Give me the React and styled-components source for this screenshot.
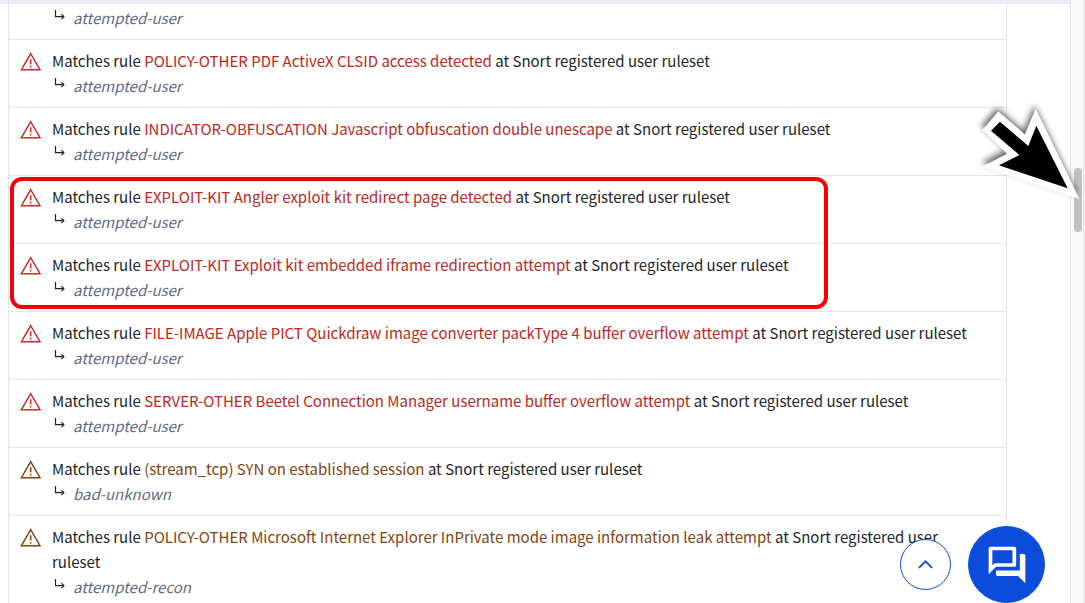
import styled, { createGlobalStyle } from "styled-components";

const GlobalStyle = createGlobalStyle`
    *,
    *::after {
        box-sizing: border-box;
    }

    body {
        margin: 0;
        background: #ffffff;
        color: #212529;
        font-family: "Noto Sans CJK SC", "Noto Sans", sans-serif;
        font-size: 15px;
        line-height: 25px;
    }
`;

const Page = styled.div`
    position: relative;
    display: flex;
    height: 100vh;
    overflow: hidden;
`;

const Content = styled.main`
    flex: 1;
    min-width: 0;
    border-top: 4px solid #ebecf3;
    padding: 0 63px 0 8px;
`;

const List = styled.ul`
    margin: 0;
    padding: 0;
    list-style: none;
    border: solid #e3e6ec;
    border-width: 0 1px;
`;

const Highlight = styled.li`
    position: relative;

    &::after {
        content: "";
        position: absolute;
        top: 1px;
        bottom: 3px;
        left: 1px;
        width: 818px;
        max-width: 100%;
        border: 4px solid #f40006;
        border-radius: 12px;
        pointer-events: none;
    }
`;

const SubList = styled.ul`
    margin: 0;
    padding: 0;
    list-style: none;
`;

const Row = styled.li`
    display: flex;
    gap: 10px;
    padding: ${({ $continued }) => ($continued ? "1px" : "8px")} 24px 9px 11px;
    border-bottom: 1px solid #e3e6ec;
`;

const IconSlot = styled.div`
    flex: none;
    width: 22px;
    height: 25px;
    padding-top: 4px;
    display: flex;
    align-items: flex-start;
    color: ${({ $level }) => ($level === "high" ? "#bf2f2a" : "#7f4510")};
`;

const Body = styled.div`
    flex: 1;
    min-width: 0;
`;

const Text = styled.div`
    overflow-wrap: anywhere;
`;

const RuleLink = styled.a`
    color: ${({ $level }) => ($level === "high" ? "#bf2722" : "#7f4510")};
    text-decoration: none;
`;

const Category = styled.div`
    display: flex;
    gap: 8px;
    padding-left: 1px;
    color: #606b85;
    font-style: italic;

    svg {
        flex: none;
        margin-top: 4px;
        color: #212529;
    }
`;

const ScrollTrack = styled.div`
    flex: none;
    width: 15px;
    padding: 168px 3px 0;
    background: #fafafa;
    border: solid #e8e8e8;
    border-width: 0 2px 0 1px;
`;

const ScrollThumb = styled.div`
    width: 8px;
    height: 64px;
    border-radius: 4px;
    background: #c1c1c1;
`;

const Floating = styled.div`
    position: absolute;
    right: 40px;
    bottom: 0;
    display: flex;
    align-items: center;
    gap: 17px;
`;

const RoundButton = styled.button`
    display: flex;
    align-items: center;
    justify-content: center;
    width: ${({ $size }) => $size}px;
    height: ${({ $size }) => $size}px;
    padding: 0;
    border: 1px solid #0b4dda;
    border-radius: 50%;
    background: ${({ $filled }) => ($filled ? "#0b4dda" : "#ffffff")};
    color: ${({ $filled }) => ($filled ? "#ffffff" : "#0b4dda")};
    cursor: pointer;
`;

const Pointer = styled.svg`
    position: absolute;
    top: 100px;
    right: 0;
    pointer-events: none;
    overflow: visible;
`;

const WarningIcon = () => (
    <svg width="22" height="20" viewBox="0 0 22 20" fill="none" stroke="currentColor" strokeWidth="1.5" aria-hidden="true">
        <path d="M10.7 1.7 1.4 17.7h18.6z" />
        <path d="M10.7 7.2v5.3M10.7 13.9v1.5" />
    </svg>
);

const BranchIcon = () => (
    <svg width="12" height="12" viewBox="0 0 12 12" fill="none" stroke="currentColor" strokeWidth="1.2" aria-hidden="true">
        <path d="M2.5 1v6.7h8.2" />
        <path d="M8.4 5.2 10.9 7.7 8.4 10.2" />
    </svg>
);

const firstRules = [
    { level: "high", name: "POLICY-OTHER PDF ActiveX CLSID access detected", category: "attempted-user" },
    { level: "high", name: "INDICATOR-OBFUSCATION Javascript obfuscation double unescape", category: "attempted-user" },
];

const exploitRules = [
    { level: "high", name: "EXPLOIT-KIT Angler exploit kit redirect page detected", category: "attempted-user" },
    { level: "high", name: "EXPLOIT-KIT Exploit kit embedded iframe redirection attempt", category: "attempted-user" },
];

const lastRules = [
    { level: "high", name: "FILE-IMAGE Apple PICT Quickdraw image converter packType 4 buffer overflow attempt", category: "attempted-user" },
    { level: "high", name: "SERVER-OTHER Beetel Connection Manager username buffer overflow attempt", category: "attempted-user" },
    { level: "medium", name: "(stream_tcp) SYN on established session", category: "bad-unknown" },
    { level: "medium", name: "POLICY-OTHER Microsoft Internet Explorer InPrivate mode image information leak attempt", category: "attempted-recon" },
];

const Rule = ({ level, name, category }) => (
    <Row>
        <IconSlot $level={level}><WarningIcon /></IconSlot>
        <Body>
            <Text>
                Matches rule <RuleLink href="#" $level={level}>{name}</RuleLink> at Snort registered user ruleset
            </Text>
            <Category><BranchIcon />{category}</Category>
        </Body>
    </Row>
);

const App = () => (
    <>
        <GlobalStyle />
        <Page>
            <Content>
                <List>
                    <Row $continued>
                        <IconSlot />
                        <Body>
                            <Category><BranchIcon />attempted-user</Category>
                        </Body>
                    </Row>
                    {firstRules.map((rule) => <Rule key={rule.name} {...rule} />)}
                    <Highlight>
                        <SubList>
                            {exploitRules.map((rule) => <Rule key={rule.name} {...rule} />)}
                        </SubList>
                    </Highlight>
                    {lastRules.map((rule) => <Rule key={rule.name} {...rule} />)}
                </List>
            </Content>
            <ScrollTrack>
                <ScrollThumb />
            </ScrollTrack>
            <Floating>
                <RoundButton type="button" $size={51} aria-label="Back to top">
                    <svg width="16" height="10" viewBox="0 0 16 10" fill="none" stroke="currentColor" strokeWidth="1.8">
                        <path d="M.9 7.9 7.5 1.3l6.6 6.6" />
                    </svg>
                </RoundButton>
                <RoundButton type="button" $size={77} $filled aria-label="Open chat">
                    <svg width="44" height="44" viewBox="0 0 24 24" fill="currentColor">
                        <path d="M15 4v7H5.17L4 12.17V4h11m1-2H3c-.55 0-1 .45-1 1v14l4-4h10c.55 0 1-.45 1-1V3c0-.55-.45-1-1-1zm5 4h-2v9H6v2c0 .55.45 1 1 1h11l4 4V7c0-.55-.45-1-1-1z" />
                    </svg>
                </RoundButton>
            </Floating>
            <Pointer width="110" height="110" viewBox="45 30 330 330" aria-hidden="true">
                <defs>
                    <filter id="pointer-shadow" x="-20%" y="-20%" width="140%" height="140%">
                        <feDropShadow dx="-4" dy="-12" stdDeviation="10" floodColor="#000000" floodOpacity="0.6" />
                    </filter>
                </defs>
                <path d="M115 65 195 134 227 58 358 327 68 230 142 191 68 120z" fill="#ffffff" filter="url(#pointer-shadow)" />
                <path d="M120 95 205 168 229 107 323 295 117 226 178 195 93 122z" fill="#000000" />
            </Pointer>
        </Page>
    </>
);

export default App;
